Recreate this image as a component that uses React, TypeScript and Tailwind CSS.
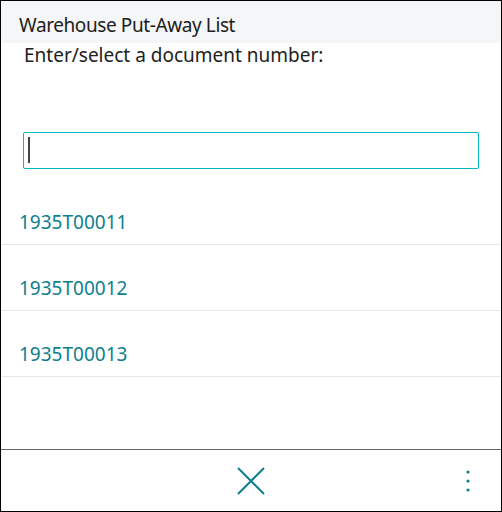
import React, { useState } from 'react';

const documents = ['1935T00011', '1935T00012', '1935T00013'];

const App: React.FC = () => {
  const [value, setValue] = useState('');
  const [focused, setFocused] = useState(true);

  return (
    <div
      className="w-[502px] h-[512px] flex flex-col bg-white border border-black text-[#212121]"
      style={{ fontFamily: '"Noto Sans", "Open Sans", sans-serif' }}
    >
      {/* Title */}
      <div className="h-[42px] bg-[#f5f6f7] flex items-end pl-[18px] pb-[6px]">
        <h1 className="text-[19px] leading-[24px] tracking-[-0.4px]">Warehouse Put-Away List</h1>
      </div>

      <p className="pl-[23px] text-[19px] leading-[24px]">Enter/select a document number:</p>

      {/* Search */}
      <div className="px-[22px] pt-[65px] pb-[10px]">
        <div className="relative">
          <input
            autoFocus
            value={value}
            onChange={e => setValue(e.target.value)}
            onFocus={() => setFocused(true)}
            onBlur={() => setFocused(false)}
            className="w-full h-[37px] px-[4px] border border-[#00b7c3] rounded-[2px] outline-none caret-transparent text-[16px]"
          />
          {focused && value === '' && (
            <span className="absolute left-[5px] top-[5px] w-[2px] h-[26px] bg-[#444] pointer-events-none" />
          )}
        </div>
      </div>

      {/* Document list */}
      <ul className="flex-1">
        {documents.map(doc => (
          <li key={doc} className="h-[66px] border-b border-[#e6e6e6] flex items-end pl-[18px] pb-[9px]">
            <a href="#" className="text-[#0f7f8d] text-[19px] leading-[26px]">
              {doc}
            </a>
          </li>
        ))}
      </ul>

      {/* Footer */}
      <div className="h-[62px] border-t border-[#666] flex items-center relative">
        <button className="mx-auto text-[#0f7f8d]" aria-label="Close">
          <svg width="28" height="28" viewBox="0 0 28 28" fill="none" stroke="currentColor" strokeWidth="2">
            <path d="M1 1 L27 27 M27 1 L1 27" />
          </svg>
        </button>
        <button className="absolute right-[30px] text-[#0f7f8d]" aria-label="More options">
          <svg width="6" height="24" viewBox="0 0 6 24" fill="currentColor">
            <circle cx="3" cy="3" r="1.6" />
            <circle cx="3" cy="12" r="1.6" />
            <circle cx="3" cy="21" r="1.6" />
          </svg>
        </button>
      </div>
    </div>
  );
};

export default App;
